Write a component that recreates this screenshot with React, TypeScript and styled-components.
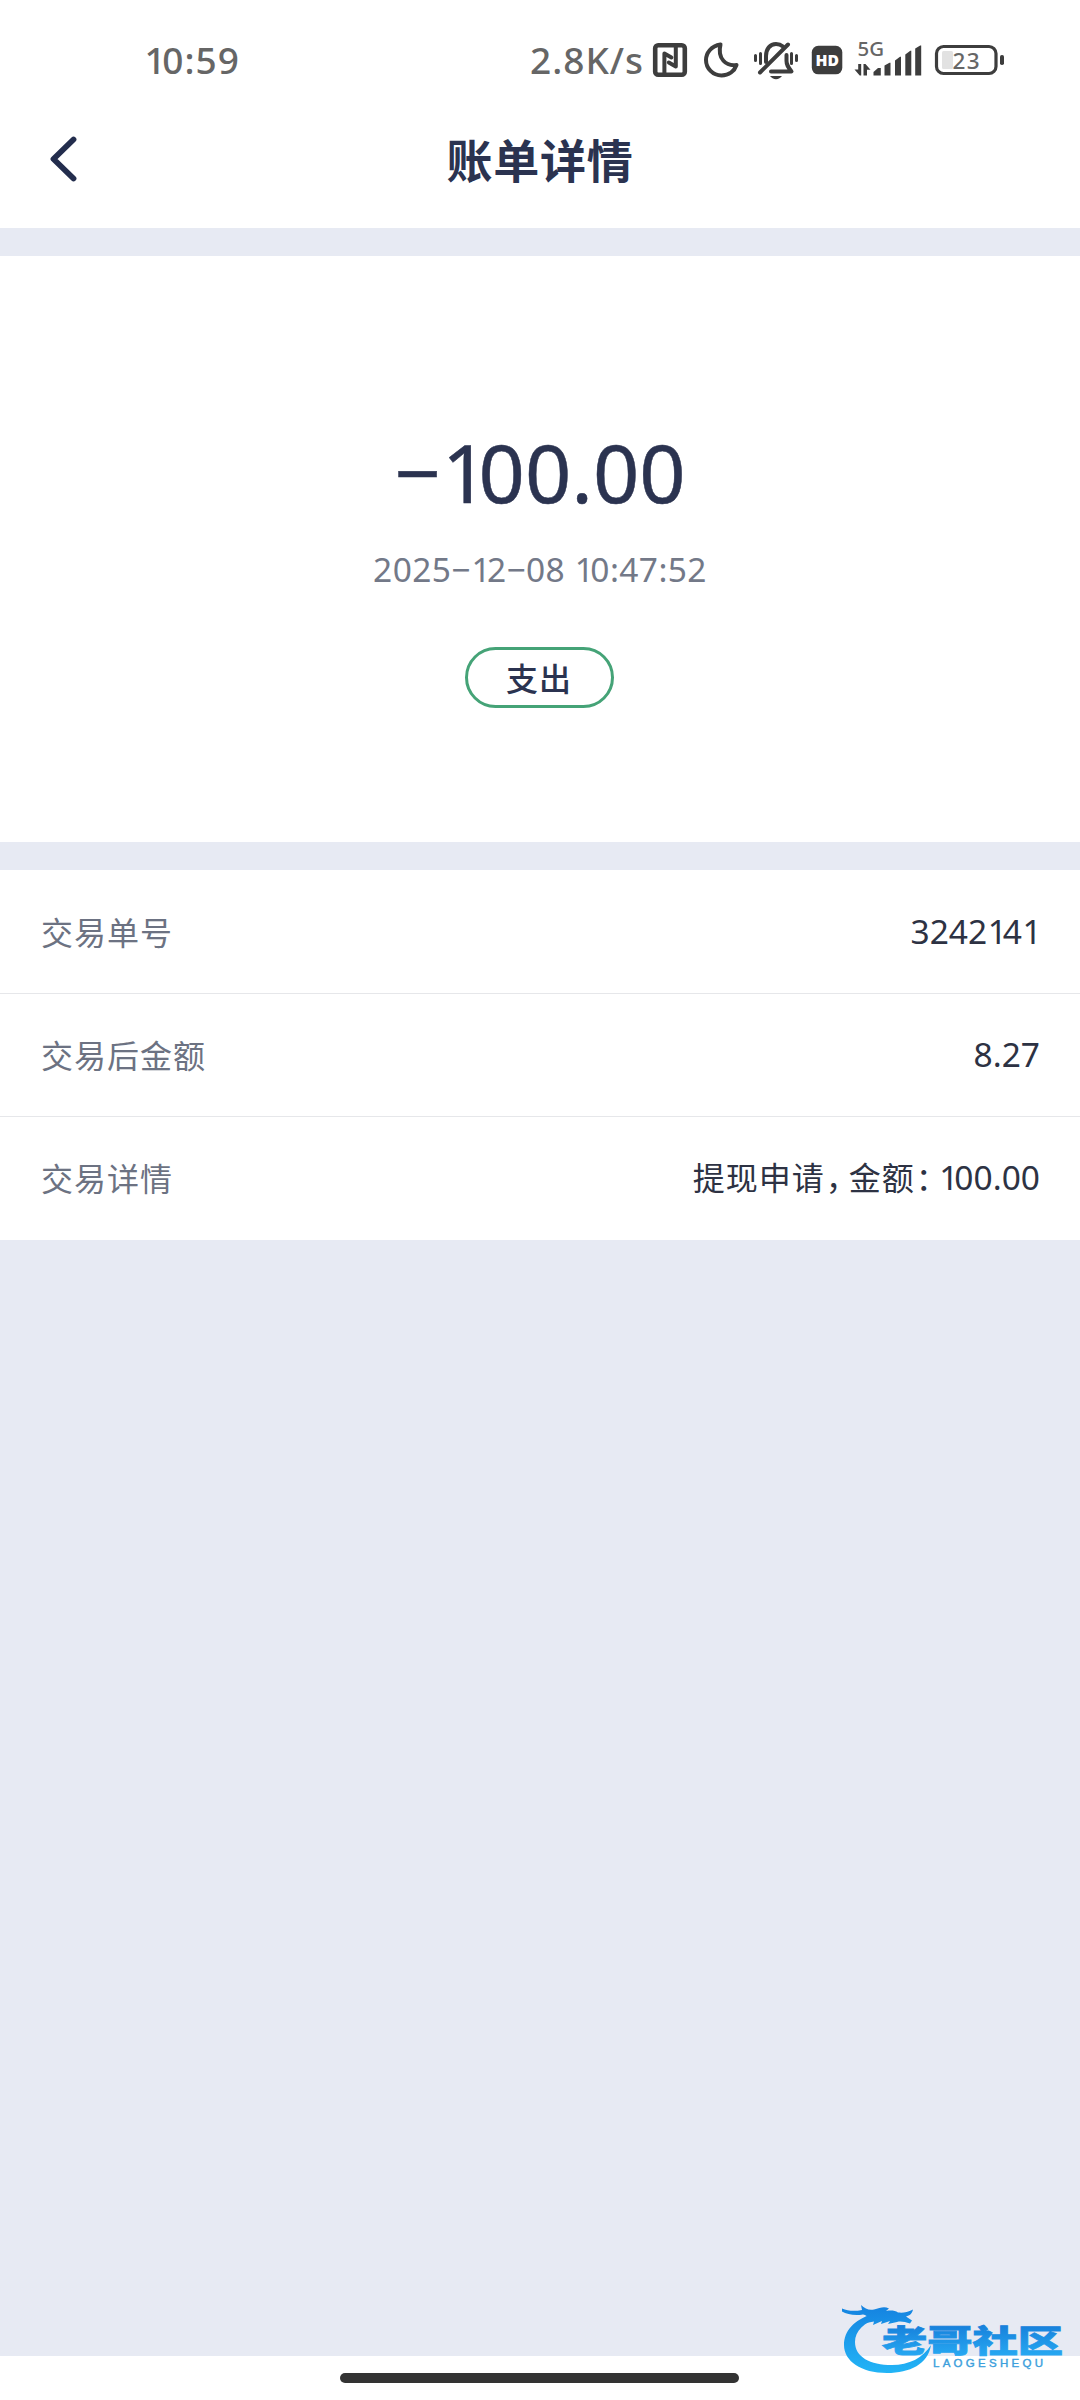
import React from "react";
import styled, { createGlobalStyle } from "styled-components";

const ink = "#2b3350";
const glyph = "#3d3d3d";

const GlobalStyle = createGlobalStyle`
  body {
    margin: 0;
    background: #e7eaf3;
    font-family: "Noto Sans", "Noto Sans CJK SC", sans-serif;
  }
`;

const Screen = styled.div`
  width: 1080px;
  height: 2400px;
  display: flex;
  flex-direction: column;
  overflow: hidden;
  position: relative;
  background: #e7eaf3;
`;

const StatusBar = styled.div`
  box-sizing: border-box;
  height: 92px;
  padding: 28px 70px 0 144px;
  display: flex;
  align-items: center;
  justify-content: space-between;
  background: #fff;
  color: #666;
  font-size: 37px;
  font-weight: 500;
  line-height: 64px;
  letter-spacing: 1px;
`;

const StatusGroup = styled.div`
  display: flex;
  align-items: center;
`;

const Speed = styled.span`
  width: 120px;
  white-space: nowrap;
`;

const Icon = styled.svg`
  display: block;
  flex: none;
  letter-spacing: 0;
`;

const NavBar = styled.header`
  height: 136px;
  display: grid;
  grid-template-columns: 120px 1fr 120px;
  align-items: center;
  background: #fff;
`;

const BackButton = styled.button`
  border: 0;
  background: none;
  padding: 0 0 0 46px;
  height: 60px;
  display: flex;
  align-items: center;
`;

const Title = styled.h1`
  margin: 0;
  padding-bottom: 4px;
  text-align: center;
  font-family: "Noto Sans CJK SC", sans-serif;
  font-size: 46px;
  font-weight: 700;
  line-height: 60px;
  letter-spacing: 0.8px;
  color: ${ink};
`;

const Summary = styled.section`
  box-sizing: border-box;
  margin-top: 28px;
  height: 586px;
  padding-top: 161px;
  display: flex;
  flex-direction: column;
  align-items: center;
  background: #fff;
`;

const Amount = styled.div`
  font-size: 81px;
  line-height: 110px;
  color: ${ink};
  -webkit-text-stroke: 0.5px ${ink};
`;

const Time = styled.div`
  margin-top: 12px;
  font-size: 33.5px;
  line-height: 60px;
  letter-spacing: 0.4px;
  color: #737988;
`;

const Pill = styled.div`
  box-sizing: border-box;
  margin: 48px 2px 0 0;
  width: 149px;
  height: 61px;
  padding-bottom: 2px;
  border: 3px solid #45a377;
  border-radius: 31px;
  display: flex;
  align-items: center;
  justify-content: center;
  font-family: "Noto Sans CJK SC", sans-serif;
  font-size: 32px;
  font-weight: 500;
  letter-spacing: 1px;
  color: ${ink};
`;

const Details = styled.section`
  margin-top: 28px;
  background: #fff;
`;

const Row = styled.div`
  box-sizing: border-box;
  height: 123px;
  padding: 0 40px 2px 41px;
  display: flex;
  align-items: center;
  justify-content: space-between;
  & + & {
    border-top: 1px solid #e6e7ea;
  }
  &:last-child {
    height: 124px;
    padding-bottom: 4px;
  }
`;

const Label = styled.span`
  font-family: "Noto Sans CJK SC", sans-serif;
  font-size: 32px;
  letter-spacing: 1px;
  color: #6c7282;
`;

const Value = styled.span`
  font-size: 33.5px;
  color: #2d3243;
`;

const Chinese = styled.span`
  font-family: "Noto Sans CJK SC", sans-serif;
  font-size: 32px;
  letter-spacing: 1px;
`;

const Punct = styled.span`
  margin-right: 6px;
  padding-left: 1px;
  font-feature-settings: "halt";
`;

const NarrowOne = styled.span<{ $last: boolean }>`
  margin-left: 0.015em;
  margin-right: ${(p) => (p.$last ? "-0.05em" : "-0.12em")};
`;

const GestureArea = styled.footer`
  margin-top: auto;
  height: 44px;
  display: flex;
  justify-content: center;
  align-items: flex-start;
  background: #fff;
`;

const GestureBar = styled.div`
  margin: 17px 1px 0 0;
  width: 399px;
  height: 10px;
  border-radius: 5px;
  background: #333;
`;

const Watermark = styled.svg`
  position: absolute;
  left: 836px;
  top: 2296px;
`;

/* Figures are set with a tighter 1 than the tabular default. */
const Figures = ({ children }: { children: string }) => (
  <>
    {children.split(/(1)/).map((part, i, all) =>
      part === "1" ? (
        <NarrowOne key={i} $last={all.slice(i + 1).join("") === ""}>1</NarrowOne>
      ) : (
        part
      )
    )}
  </>
);

const NfcIcon = () => (
  <Icon width="46" height="48" viewBox="650 36 46 48" fill="none" stroke={glyph} strokeLinecap="round" strokeLinejoin="round">
    <rect x="655.2" y="45.2" width="29.6" height="29.6" rx="3" strokeWidth="4.6" />
    <path d="M664.4 74V53.5l7 4" strokeWidth="4" />
    <path d="M675.800 46v20.500l-7-4" strokeWidth="4" />
  </Icon>
);

const MoonIcon = () => (
  <Icon width="50" height="48" viewBox="696 36 50 48" fill="none" stroke={glyph} strokeLinejoin="round">
    <path d="M720.5 44.5C711 46 706 53 706 60c0 8.500 7 15.500 15.500 15.500 7.500 0 13-4.500 15-10.500-10 1.500-19.500-6-16-20.500Z" strokeWidth="4" />
  </Icon>
);

const MutedBellIcon = () => (
  <Icon width="58" height="48" viewBox="746 36 58 48" fill="none" stroke={glyph} strokeWidth="4" strokeLinecap="round">
    <path d="M755.500 55.500v5M760.500 53.500v10M791.500 53.500v10M796.500 55.500v5" strokeWidth="3" />
    <path d="M766 62v-6c0-7 4-12 10-12 3 0 5 .8 7 2.500" />
    <path d="M788 44.500 760 72.500" />
    <path d="M786.500 55v6c0 4 1.500 6 5 10.500H771" strokeLinejoin="round" />
    <path d="M770 76h12c-1.500 2-3.500 3.200-6 3.200s-4.500-1.200-6-3.200Z" fill={glyph} stroke="none" />
  </Icon>
);

const HdText = styled.text`
  font-family: "Open Sans", "Noto Sans", sans-serif;
  font-weight: 800;
  font-size: 16px;
`;

const HdIcon = () => (
  <Icon width="46" height="48" viewBox="804 36 46 48">
    <rect x="811.800" y="45.800" width="30.500" height="28.500" rx="6.500" fill={glyph} />
    <HdText x="815.500" y="65.800" fill="#fff" textLength="23.500" lengthAdjust="spacingAndGlyphs">HD</HdText>
  </Icon>
);

const NetText = styled.text<{ $size: number }>`
  font-family: "Noto Sans", sans-serif;
  font-size: ${(p) => p.$size}px;
`;

const SignalIcon = () => (
  <Icon width="78" height="48" viewBox="850 36 78 48" fill={glyph}>
    <NetText $size={19.5} x="857.500" y="56" fill="#666" textLength="26.500" lengthAdjust="spacingAndGlyphs">5G</NetText>
    <path d="M858.200 64h3v11.500h-1.500L854.500 69.500h3.700ZM863.500 64h2l5 5.800h-3.500V75.500h-3.500Z" />
    <path d="M873.500 75.500v-3.500l4.500-4h2.800v7.500ZM884.500 75.500V65.500l5-2.800h1v12.800ZM895 75.500V60.500l5-3.800h1v18.800ZM905.300 75.500V54.500l5-3.700h1v24.700ZM915.200 75.500V48.500l5-3h1v30Z" />
  </Icon>
);

const BatteryIcon = () => (
  <Icon width="82" height="48" viewBox="928 36 82 48">
    <rect x="936.500" y="46.500" width="59.500" height="27" rx="7" fill="none" stroke={glyph} strokeWidth="3.200" />
    <rect x="942" y="51" width="11" height="18" rx="1.500" fill="#e2e2e2" />
    <rect x="1000" y="55" width="4" height="10" rx="1.800" fill={glyph} />
    <NetText $size={22.5} x="952.500" y="68.500" fill="#666" textLength="27" lengthAdjust="spacing">23</NetText>
  </Icon>
);

const LogoText = styled.text`
  font-family: "Noto Sans CJK SC", sans-serif;
  font-weight: 900;
  font-size: 31px;
  stroke: url(#word);
  stroke-width: 0.8px;
`;

const LogoCaption = styled.text`
  font-family: "Liberation Sans", sans-serif;
  font-size: 11.500px;
  stroke: #3c9fdc;
  stroke-width: 0.4px;
`;

const CommunityLogo = () => (
  <Watermark width="236" height="84" viewBox="836 2296 236 84">
    <defs>
      <linearGradient id="logo" gradientUnits="userSpaceOnUse" x1="0" y1="2306" x2="0" y2="2372">
        <stop offset="0" stopColor="#1583e0" />
        <stop offset="1" stopColor="#22b4f6" />
      </linearGradient>
      <linearGradient id="word" x1="0" y1="0" x2="0" y2="1">
        <stop offset="0.200" stopColor="#1780db" />
        <stop offset="0.900" stopColor="#27a9f2" />
      </linearGradient>
    </defs>
    <g fill="url(#logo)">
      <path d="M872 2314C854 2320 844 2331 844 2345c0 16 17 28 43 28 23 0 41-9 44-28-8 13-22 20-39 20-22 0-37-8-37-23 0-11 9-20 24-24Z" />
      <path d="M842 2308.500c6 2.500 12 3 20 1.500l-1-5c4 4 8 5.500 13 4.500 6-1.500 10-3.500 15-1l-3 2.500c5-1 9-.5 12 1.500 5 .5 9 0 15-3-1 4-3 6-7 7l6 4-2 3c-5-1.500-9-2.500-13-1.500l-9 2 2-3-9 3 1-3-9 4 1-3.500-8 1.500 5-5c-4-1-5-3-8-3.500-8 1.500-16 0-21-3Z" />
    </g>
    <g fill="url(#word)">
      <LogoText transform="translate(882 2352) scale(1.460 1)" textLength="124" lengthAdjust="spacing">老哥社区</LogoText>
    </g>
    <LogoCaption x="933" y="2367" fill="#3c9fdc" textLength="110" lengthAdjust="spacing">LAOGESHEQU</LogoCaption>
  </Watermark>
);

export default function App() {
  return (
    <Screen>
      <GlobalStyle />
      <StatusBar>
        <span><Figures>10:59</Figures></span>
        <StatusGroup>
          <Speed>2.8K/s</Speed>
          <NfcIcon />
          <MoonIcon />
          <MutedBellIcon />
          <HdIcon />
          <SignalIcon />
          <BatteryIcon />
        </StatusGroup>
      </StatusBar>
      <NavBar>
        <BackButton aria-label="返回">
          <Icon width="34" height="50" viewBox="46 135 34 50" fill="none" stroke="#232d4d" strokeWidth="5.800" strokeLinecap="round" strokeLinejoin="round">
            <path d="M73.500 139.500 53.500 159l20 19.500" />
          </Icon>
        </BackButton>
        <Title>账单详情</Title>
      </NavBar>
      <Summary>
        <Amount><Figures>−100.00</Figures></Amount>
        <Time><Figures>2025−12−08 10:47:52</Figures></Time>
        <Pill>支出</Pill>
      </Summary>
      <Details>
        <Row>
          <Label>交易单号</Label>
          <Value><Figures>3242141</Figures></Value>
        </Row>
        <Row>
          <Label>交易后金额</Label>
          <Value>8.27</Value>
        </Row>
        <Row>
          <Label>交易详情</Label>
          <Value>
            <Chinese>提现申请<Punct>{"\uff0c"}</Punct>金额<Punct>{"\uff1a"}</Punct></Chinese>
            <Figures>100.00</Figures>
          </Value>
        </Row>
      </Details>
      <GestureArea>
        <GestureBar />
      </GestureArea>
      <CommunityLogo />
    </Screen>
  );
}
